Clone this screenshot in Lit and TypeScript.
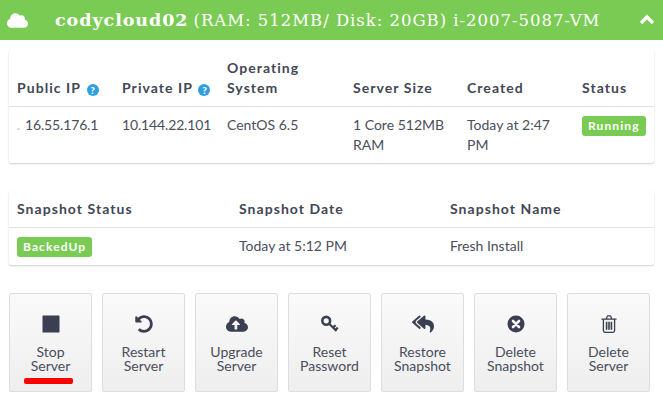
import { LitElement, html, css } from "lit";
import { customElement } from "lit/decorators.js";

const CLOUD = "M537.6 226.6c4.1-10.7 6.4-22.4 6.4-34.6 0-53-43-96-96-96-19.7 0-38.1 6-53.3 16.2C367 64.2 315.3 32 256 32c-88.4 0-160 71.6-160 160 0 2.7.1 5.4.2 8.1C40.2 219.8 0 273.2 0 336c0 79.5 64.5 144 144 144h368c70.7 0 128-57.3 128-128 0-61.9-44-113.6-102.4-125.4z";
const UPLOAD = CLOUD + "M393.4 288H328v112c0 8.8-7.2 16-16 16h-48c-8.8 0-16-7.2-16-16V288h-65.4c-14.3 0-21.4-17.2-11.3-27.3l105.4-105.4c6.2-6.2 16.4-6.2 22.6 0l105.4 105.4c10.1 10.1 2.9 27.3-11.3 27.3z";
const UNDO = "M255.545 8c-66.269.119-126.438 26.233-170.86 68.685L48.971 40.971C33.851 25.851 8 36.559 8 57.941V192c0 13.255 10.745 24 24 24h134.059c21.382 0 32.09-25.851 16.971-40.971l-41.75-41.75c30.864-28.899 70.801-44.907 113.23-45.273 92.398-.798 170.283 73.977 169.484 169.442C423.236 348.009 349.816 424 256 424c-41.127 0-79.997-14.678-110.63-41.556-4.743-4.161-11.906-3.908-16.368.553L89.34 422.659c-4.872 4.872-4.631 12.815.482 17.433C133.798 479.813 192.074 504 256 504c136.966 0 247.999-111.033 248-247.998C504.001 119.193 392.354 7.755 255.545 8z";
const REPLY_ALL = "M136.309 189.836L312.313 37.851C327.72 24.546 352 35.348 352 56.015v82.763c129.182 10.231 224 52.212 224 183.548 0 61.441-39.582 122.309-83.333 154.132-13.653 9.931-33.111-2.533-28.077-18.631 38.512-123.162-3.922-169.482-112.59-182.015v84.175c0 20.701-24.3 31.453-39.687 18.164L136.309 226.164c-11.071-9.561-11.086-26.753 0-36.328zm-128 36.328L184.313 378.15C199.7 391.439 224 380.687 224 359.986v-15.818l-108.606-93.785A55.96 55.96 0 0 1 96 207.998a55.953 55.953 0 0 1 19.393-42.38L224 71.832V56.015c0-20.667-24.28-31.469-39.687-18.164L8.309 189.836c-11.086 9.575-11.071 26.767 0 36.328z";

const icons = {
  stop: html`<svg width="18" height="18" viewBox="0 0 18 18"><rect x="0.5" y="0.5" width="17" height="17" rx="0.5" fill="currentColor"/></svg>`,
  restart: html`<svg width="18" height="18" viewBox="0 0 512 512"><path fill="currentColor" d=${UNDO}/></svg>`,
  upgrade: html`<svg width="22" height="18" viewBox="0 0 640 512"><path fill="currentColor" d=${UPLOAD}/></svg>`,
  key: html`<svg width="20" height="20" viewBox="0 0 20 20"><g fill="none" stroke="currentColor"><circle cx="6.2" cy="6.8" r="3.9" stroke-width="2.6"/><path d="M9.2 9.8L16.5 17M13 13.6l2.6-2.4M15.4 16l2.4-2.4" stroke-width="2.2"/></g></svg>`,
  restore: html`<svg width="22" height="20" viewBox="0 0 576 512"><path fill="currentColor" d=${REPLY_ALL}/></svg>`,
  del: html`<svg width="18" height="18" viewBox="0 0 18 18"><circle cx="9" cy="9" r="8.5" fill="currentColor"/><path d="M6 6l6 6M12 6l-6 6" stroke="#f5f5f5" stroke-width="2.6" stroke-linecap="round"/></svg>`,
  trash: html`<svg width="16" height="18" viewBox="0 0 16 18"><g fill="none" stroke="currentColor" stroke-width="1.3"><path d="M0.5 4.2h15M2.4 4.2v11.4c0 1 .6 1.7 1.5 1.7h8.2c.9 0 1.5-.7 1.5-1.7V4.2M5.2 4.2l1-2.8c.1-.3.4-.6.8-.6h2c.4 0 .7.3.8.6l1 2.8"/><path d="M5.6 6.8v8M8 6.8v8M10.4 6.8v8" stroke-width="1.6"/></g></svg>`,
};

const help = html`<span class="help">?</span>`;

@customElement("app-root")
export class AppRoot extends LitElement {
  static styles = css`
    :host { display: block; width: 663px; height: 406px; overflow: hidden; background: #fff; font-family: Lato, "Liberation Sans", sans-serif; color: #4a4e5b; font-size: 14px; line-height: 20px; }
    .bar { height: 40px; background: #7acb53; color: #fff; display: flex; align-items: center; }
    .cloud { margin-left: 7px; width: 21px; height: 17px; display: block; }
    .title { margin-left: 27px; font-family: "DejaVu Serif", serif; font-size: 16.5px; white-space: nowrap; flex: 1; letter-spacing: 0.97px; }
    .title b { font-weight: 700; font-size: 17.5px; letter-spacing: 0.95px; margin-right: 5px; }
    .title span { font-weight: 400; }
    .chev { margin-right: 8px; display: block; }
    .card { margin: 10px 9px 0; background: #fff; border-radius: 3px; box-shadow: 0 1px 2px rgba(0,0,0,.2); }
    .card + .card { margin-top: 28px; }
    table { border-collapse: collapse; width: 100%; table-layout: fixed; }
    th { font-weight: 700; text-align: left; vertical-align: bottom; padding: 8px 8px; letter-spacing: 1.05px; color: #424655; border-bottom: 1px solid #e0e1e6; }
    td { text-align: left; vertical-align: top; padding: 8px 8px; }
    td.ip { letter-spacing: -0.15px; }
    .help { display: inline-flex; width: 12px; height: 12px; border-radius: 50%; background: #2e9fe0; color: #fff; font-size: 10px; font-weight: 900; line-height: 12px; align-items: center; justify-content: center; letter-spacing: 0; margin-left: 1.5px; vertical-align: -1px; }
    .dot { display: inline-block; width: 8px; color: #bbb; }
    .badge { display: inline-block; height: 20px; line-height: 20px; padding: 0 6px; border-radius: 3px; background: #7acb53; color: #fff; font-size: 12px; font-weight: 700; letter-spacing: 1.1px; }
    .actions { display: flex; gap: 10px; margin: 28px 0 0 9px; }
    .btn { position: relative; box-sizing: border-box; width: 83px; height: 99px; padding: 0; border: 1px solid #ddd; border-radius: 2px; background: linear-gradient(#fafafa, #eeeeee); color: #4a4e5b; font: inherit; line-height: 14px; display: flex; flex-direction: column; align-items: center; }
    .ico { height: 22px; margin-top: 19px; display: flex; align-items: center; justify-content: center; color: #3a3f51; }
    .lbl { margin-top: 10px; text-align: center; }
    .mark { position: absolute; left: 14px; top: 84px; width: 49px; height: 6px; border-radius: 2px; background: #f00; }
  `;

  render() {
    const buttons: [keyof typeof icons, string, string][] = [
      ["stop", "Stop", "Server"],
      ["restart", "Restart", "Server"],
      ["upgrade", "Upgrade", "Server"],
      ["key", "Reset", "Password"],
      ["restore", "Restore", "Snapshot"],
      ["del", "Delete", "Snapshot"],
      ["trash", "Delete", "Server"],
    ];
    return html`
      <div class="bar">
        <svg class="cloud" viewBox="0 0 640 512"><path fill="#fff" d=${CLOUD}/></svg>
        <div class="title"><b>codycloud02</b><span>(RAM: 512MB/ Disk: 20GB) i-2007-5087-VM</span></div>
        <svg class="chev" width="16" height="12" viewBox="0 0 16 12"><path d="M2 9l6-6 6 6" fill="none" stroke="#fff" stroke-width="3.4"/></svg>
      </div>
      <div class="card">
        <table>
          <colgroup><col style="width:105px"><col style="width:105px"><col style="width:126px"><col style="width:114px"><col style="width:115px"><col></colgroup>
          <tr>
            <th>Public IP ${help}</th><th>Private IP ${help}</th><th>Operating System</th><th>Server Size</th><th>Created</th><th>Status</th>
          </tr>
          <tr>
            <td class="ip"><span class="dot">.</span>16.55.176.1</td><td class="ip">10.144.22.101</td><td>CentOS 6.5</td><td>1 Core 512MB RAM</td><td>Today at 2:47 PM</td><td><span class="badge">Running</span></td>
          </tr>
        </table>
      </div>
      <div class="card">
        <table>
          <colgroup><col style="width:222px"><col style="width:211px"><col></colgroup>
          <tr><th>Snapshot Status</th><th>Snapshot Date</th><th>Snapshot Name</th></tr>
          <tr><td><span class="badge">BackedUp</span></td><td>Today at 5:12 PM</td><td>Fresh Install</td></tr>
        </table>
      </div>
      <div class="actions">
        ${buttons.map(([i, a, b]) => html`
          <button class="btn">
            <div class="ico">${icons[i]}</div>
            <div class="lbl">${a}<br>${b}</div>
            ${i === "stop" ? html`<div class="mark"></div>` : ""}
          </button>`)}
      </div>
    `;
  }
}
